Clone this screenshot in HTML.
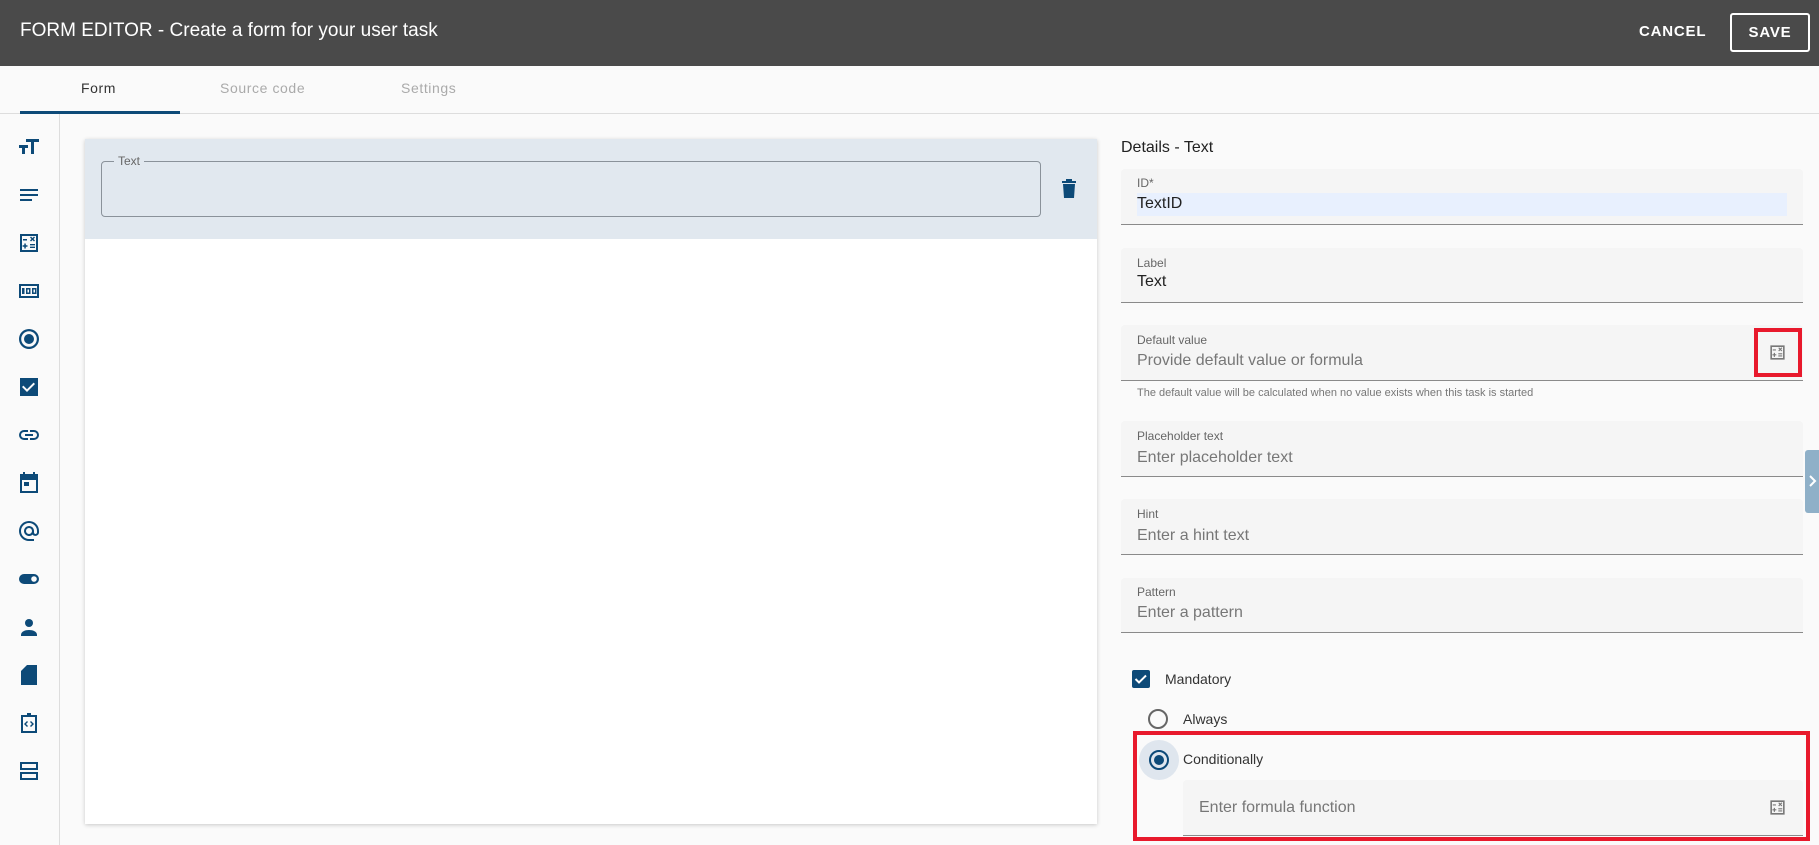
<!DOCTYPE html>
<html><head><meta charset="utf-8"><style>
*{box-sizing:border-box;margin:0;padding:0}
body{width:1819px;height:845px;overflow:hidden;background:#fafafa;font-family:"Liberation Sans",sans-serif;position:relative;color:#222}
.a{position:absolute}
.hdr{left:0;top:0;width:1819px;height:66px;background:#4a4a4a}
.f{background:#f5f5f5;border-bottom:1px solid #8a8a8a;border-radius:4px 4px 0 0}
.lab{font-size:12px;color:#666}
.val{font-size:16px;color:#777}
svg.ic{position:absolute;left:17px;width:24px;height:24px;fill:#0d4a78}
</style></head><body>
<div class="a hdr"></div>
<div class="a" style="left:20px;top:20px;font-size:19px;color:#fff">FORM EDITOR - Create a form for your user task</div>
<div class="a" style="left:1639px;top:23px;font-size:15px;font-weight:bold;color:#fff;letter-spacing:.8px">CANCEL</div>
<div class="a" style="left:1730px;top:13px;width:80px;height:39px;border:2px solid #fff;border-radius:3px;color:#fff;font-size:15px;font-weight:bold;text-align:center;line-height:35px;letter-spacing:.8px">SAVE</div>
<div class="a" style="left:0;top:66px;width:1819px;height:48px;background:#fafafa;border-bottom:1px solid #ddd"></div>
<div class="a" style="left:81px;top:80px;font-size:14px;color:#333;letter-spacing:.6px">Form</div>
<div class="a" style="left:220px;top:80px;font-size:14px;color:#aaa;letter-spacing:.6px">Source code</div>
<div class="a" style="left:401px;top:80px;font-size:14px;color:#aaa;letter-spacing:.6px">Settings</div>
<div class="a" style="left:20px;top:111px;width:160px;height:3px;background:#0d4a78"></div>
<div class="a" style="left:0;top:114px;width:60px;height:731px;border-right:1px solid #ddd"></div>
<svg class="ic" style="top:134px" viewBox="0 0 24 24"><path d="M9 5v3h5v12h3V8h5V5zM2 11v3h3v6h3v-6h3v-3z"/></svg>
<svg class="ic" style="top:183px" viewBox="0 0 24 24"><path d="M3 6h18v2H3zM3 11h18v2H3zM3 16h12v2H3z"/></svg>
<svg class="ic" style="top:231px" viewBox="0 0 24 24"><path d="M3 3h18v18H3zM5 5v14h14V5zM6 8h4v1.5H6zM13 6.5l1-1 1.5 1.5 1.5-1.5 1 1-1.5 1.5 1.5 1.5-1 1-1.5-1.5-1.5 1.5-1-1 1.5-1.5zM7.3 12.5h1.5v1.7h1.7v1.5H8.8v1.8H7.3v-1.8H5.6v-1.5h1.7zM13 13h5v1.4h-5zM13 15.6h5V17h-5z"/></svg>
<svg class="ic" style="top:279px" viewBox="0 0 24 24"><path d="M2 5h20v14H2zM4 7v10h16V7zM5 9h2.5v6H5zM9 9h4.5v6H9zm1.5 1.5v3H12v-3zM15 9h4.5v6H15zm1.5 1.5v3H18v-3z"/></svg>
<svg class="ic" style="top:327px" viewBox="0 0 24 24"><path d="M12 2a10 10 0 1 0 0 20 10 10 0 0 0 0-20zm0 2.2a7.8 7.8 0 1 1 0 15.6 7.8 7.8 0 0 1 0-15.6zM12 7a5 5 0 1 0 0 10 5 5 0 0 0 0-10z"/></svg>
<svg class="ic" style="top:375px" viewBox="0 0 24 24"><path d="M3 3h18v18H3zm7 14l8-8-1.4-1.4-6.6 6.6-3.6-3.6L5 12z"/></svg>
<svg class="ic" style="top:423px" viewBox="0 0 24 24"><path d="M7 7h4v2H7a3 3 0 0 0 0 6h4v2H7A5 5 0 0 1 7 7zm6 0h4a5 5 0 0 1 0 10h-4v-2h4a3 3 0 0 0 0-6h-4zM8 11h8v2H8z"/></svg>
<svg class="ic" style="top:471px" viewBox="0 0 24 24"><path d="M6 1h2v2h8V1h2v2h3v19H3V3h3zM5 9v11h14V9zm2 2h5v4H7z"/></svg>
<svg class="ic" style="top:519px" viewBox="0 0 24 24"><path d="M12 2a10 10 0 0 0 0 20h5v-2h-5a8 8 0 1 1 8-8v1.4c0 .8-.7 1.6-1.5 1.6S17 14.2 17 13.4V12a5 5 0 1 0-1.5 3.6A3.7 3.7 0 0 0 22 13.4V12A10 10 0 0 0 12 2zm0 13a3 3 0 1 1 0-6 3 3 0 0 1 0 6z"/></svg>
<svg class="ic" style="top:567px" viewBox="0 0 24 24"><path d="M7 7h10a5 5 0 0 1 0 10H7A5 5 0 0 1 7 7zm10 2.2a2.8 2.8 0 1 0 0 5.6 2.8 2.8 0 0 0 0-5.6z"/></svg>
<svg class="ic" style="top:615px" viewBox="0 0 24 24"><circle cx="12" cy="8" r="4"/><path d="M4 20c0-3.5 4-5 8-5s8 1.5 8 5v1H4z"/></svg>
<svg class="ic" style="top:663px" viewBox="0 0 24 24"><path d="M10 2h10v20H4V8z"/></svg>
<svg class="ic" style="top:711px" viewBox="0 0 24 24"><path d="M10 2h4v2h6v18H4V4h6zM6 6v14h12V6zm4 4l-3 3 3 3 1-1-2-2 2-2zm4 0l-1 1 2 2-2 2 1 1 3-3z"/></svg>
<svg class="ic" style="top:759px" viewBox="0 0 24 24"><path d="M3 3h18v8H3zm2 2v4h14V5zM3 13h18v8H3zm2 2v4h14v-4z"/></svg>
<div class="a" style="left:85px;top:139px;width:1012px;height:685px;background:#fff;box-shadow:0 1px 4px rgba(0,0,0,.2)"></div>
<div class="a" style="left:85px;top:139px;width:1012px;height:100px;background:#e1e8ef"></div>
<div class="a" style="left:101px;top:161px;width:940px;height:56px;border:1px solid #8a929a;border-radius:4px"></div>
<div class="a" style="left:114px;top:154px;padding:0 4px;background:#e1e8ef;font-size:12px;color:#666">Text</div>
<svg class="a" style="left:1060px;top:178px" width="18" height="21" viewBox="0 0 18 21"><path fill="#0d4a78" d="M2 3h14v2H2zM6 1h6v2H6zM3 6h12l-1 14H4z"/></svg>
<div class="a" style="left:1121px;top:139px;font-size:16px;color:#222">Details - Text</div>
<div class="a f" style="left:1121px;top:169px;width:682px;height:56px"></div>
<div class="a lab" style="left:1137px;top:176px">ID*</div>
<div class="a" style="left:1137px;top:193px;width:650px;height:23px;background:#e8f0fe"></div>
<div class="a" style="left:1137px;top:195px;font-size:16px;color:#222">TextID</div>
<div class="a f" style="left:1121px;top:248px;width:682px;height:55px"></div>
<div class="a lab" style="left:1137px;top:256px">Label</div>
<div class="a" style="left:1137px;top:273px;font-size:16px;color:#222">Text</div>
<div class="a f" style="left:1121px;top:325px;width:682px;height:56px"></div>
<div class="a lab" style="left:1137px;top:333px">Default value</div>
<div class="a val" style="left:1137px;top:352px">Provide default value or formula</div>
<div class="a" style="left:1754px;top:328px;width:48px;height:49px;border:4px solid #e8192c"></div>
<svg class="a" style="left:1768px;top:343px" width="19" height="19" viewBox="0 0 24 24"><path fill="#777" d="M3 3h18v18H3zM5 5v14h14V5zM6 8h4v1.5H6zM13 6.5l1-1 1.5 1.5 1.5-1.5 1 1-1.5 1.5 1.5 1.5-1 1-1.5-1.5-1.5 1.5-1-1 1.5-1.5zM7.3 12.5h1.5v1.7h1.7v1.5H8.8v1.8H7.3v-1.8H5.6v-1.5h1.7zM13 13h5v1.4h-5zM13 15.6h5V17h-5z"/></svg>
<div class="a" style="left:1137px;top:387px;font-size:11px;color:#777">The default value will be calculated when no value exists when this task is started</div>
<div class="a f" style="left:1121px;top:421px;width:682px;height:56px"></div>
<div class="a lab" style="left:1137px;top:429px">Placeholder text</div>
<div class="a val" style="left:1137px;top:449px">Enter placeholder text</div>
<div class="a f" style="left:1121px;top:499px;width:682px;height:56px"></div>
<div class="a lab" style="left:1137px;top:507px">Hint</div>
<div class="a val" style="left:1137px;top:527px">Enter a hint text</div>
<div class="a f" style="left:1121px;top:578px;width:682px;height:55px"></div>
<div class="a lab" style="left:1137px;top:585px">Pattern</div>
<div class="a val" style="left:1137px;top:604px">Enter a pattern</div>
<div class="a" style="left:1132px;top:670px;width:18px;height:18px;background:#0d4a78;border-radius:2px"></div>
<svg class="a" style="left:1132px;top:670px" width="18" height="18" viewBox="0 0 18 18"><path d="M3.5 9l3.5 3.5 7-7" stroke="#fff" stroke-width="2" fill="none"/></svg>
<div class="a" style="left:1165px;top:671px;font-size:14px;color:#333">Mandatory</div>
<div class="a" style="left:1148px;top:709px;width:20px;height:20px;border:2px solid #666;border-radius:50%"></div>
<div class="a" style="left:1183px;top:711px;font-size:14px;color:#333">Always</div>
<div class="a" style="left:1133px;top:731px;width:677px;height:110px;border:4px solid #e8192c"></div>
<div class="a" style="left:1139px;top:740px;width:40px;height:40px;border-radius:50%;background:#dfe6ee"></div>
<div class="a" style="left:1149px;top:750px;width:20px;height:20px;border:2px solid #0d4a78;border-radius:50%"></div>
<div class="a" style="left:1154px;top:755px;width:10px;height:10px;background:#0d4a78;border-radius:50%"></div>
<div class="a" style="left:1183px;top:751px;font-size:14px;color:#333">Conditionally</div>
<div class="a f" style="left:1183px;top:780px;width:620px;height:56px"></div>
<div class="a val" style="left:1199px;top:799px">Enter formula function</div>
<svg class="a" style="left:1768px;top:798px" width="19" height="19" viewBox="0 0 24 24"><path fill="#777" d="M3 3h18v18H3zM5 5v14h14V5zM6 8h4v1.5H6zM13 6.5l1-1 1.5 1.5 1.5-1.5 1 1-1.5 1.5 1.5 1.5-1 1-1.5-1.5-1.5 1.5-1-1 1.5-1.5zM7.3 12.5h1.5v1.7h1.7v1.5H8.8v1.8H7.3v-1.8H5.6v-1.5h1.7zM13 13h5v1.4h-5zM13 15.6h5V17h-5z"/></svg>
<div class="a" style="left:1805px;top:450px;width:14px;height:63px;background:#8fb0c8;border-radius:3px 0 0 3px"></div>
<svg class="a" style="left:1808px;top:474px" width="10" height="14" viewBox="0 0 10 14"><path d="M2 2l5 5-5 5" stroke="#fff" stroke-width="2" fill="none"/></svg>
</body></html>
